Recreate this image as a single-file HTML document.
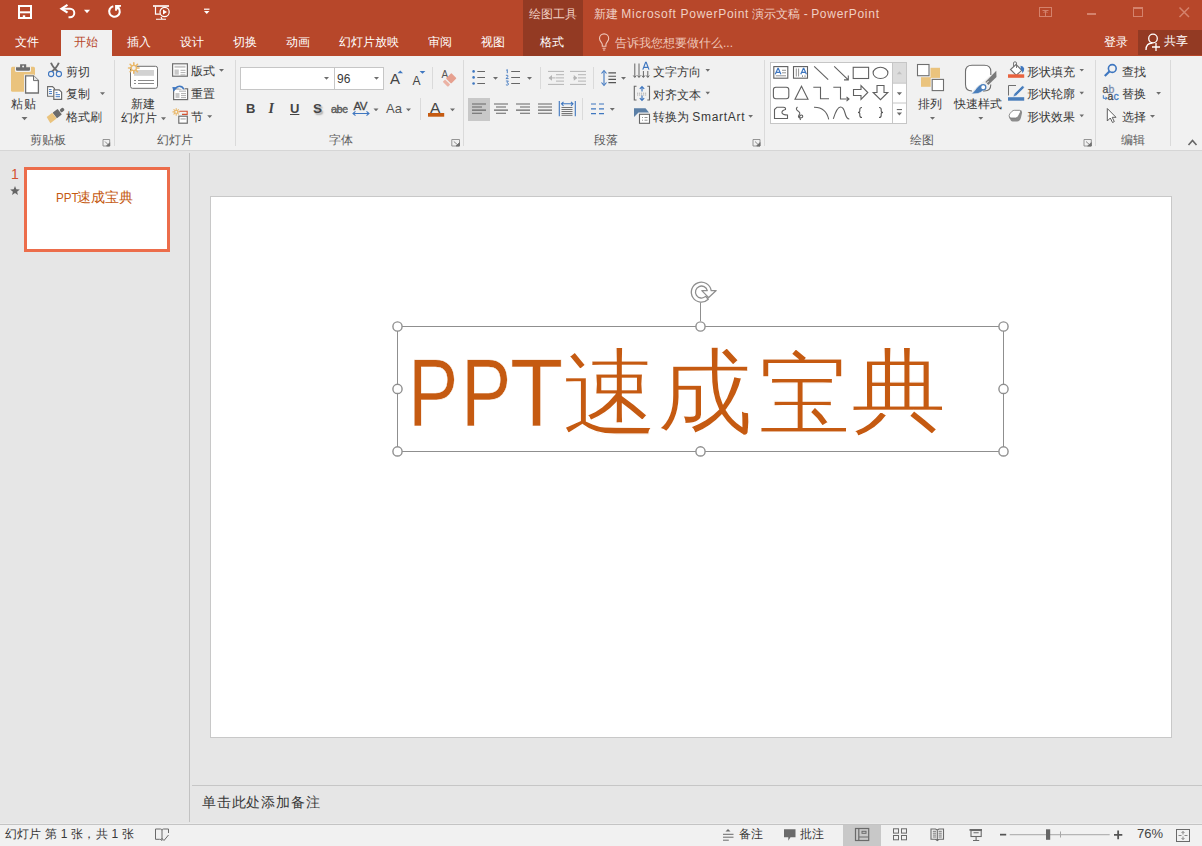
<!DOCTYPE html>
<html><head><meta charset="utf-8">
<style>
*{margin:0;padding:0;box-sizing:border-box}
html,body{width:1202px;height:846px;overflow:hidden;background:#e6e6e6;font-family:"Liberation Sans",sans-serif;font-size:12px;color:#444}
.a{position:absolute;white-space:nowrap}
.t{position:absolute;white-space:nowrap;font-size:12px;line-height:14px;color:#383838}
.tb{position:absolute;white-space:nowrap;font-size:12px;line-height:14px;color:#fff;top:35px}
.g{position:absolute;white-space:nowrap;font-size:12px;line-height:14px;color:#5c5c5c;top:133px}
#ic{position:absolute;left:0;top:0;width:1202px;height:846px;overflow:visible}
</style></head><body>
<!-- title bar & tabs -->
<div class="a" style="left:0;top:0;width:1202px;height:56px;background:#b7472a"></div>
<div class="a" style="left:523px;top:0;width:60px;height:56px;background:#933a23"></div>
<div class="a" style="left:1138px;top:30px;width:64px;height:25px;background:#933a23"></div>
<div class="a" style="left:61px;top:30px;width:51px;height:26px;background:#f1f1f1"></div>
<div class="tb" style="left:15px">文件</div>
<div class="tb" style="left:74px;color:#b7472a">开始</div>
<div class="tb" style="left:127px">插入</div>
<div class="tb" style="left:180px">设计</div>
<div class="tb" style="left:233px">切换</div>
<div class="tb" style="left:286px">动画</div>
<div class="tb" style="left:339px">幻灯片放映</div>
<div class="tb" style="left:428px">审阅</div>
<div class="tb" style="left:481px">视图</div>
<div class="tb" style="left:540px">格式</div>
<div class="tb" style="left:529px;top:7px;color:#f0cfc4">绘图工具</div>
<div class="tb" style="left:594px;top:7px;color:#f0cfc4">新建 <span style="letter-spacing:0.72px">Microsoft PowerPoint</span> 演示文稿 - <span style="letter-spacing:0.72px">PowerPoint</span></div>
<div class="tb" style="left:615px;top:36px;color:#efc6b9">告诉我您想要做什么...</div>
<div class="tb" style="left:1104px">登录</div>
<div class="tb" style="left:1164px;top:34px">共享</div>

<!-- ribbon -->
<div class="a" style="left:0;top:56px;width:1202px;height:94px;background:#f1f1f1"></div>
<div class="a" style="left:0;top:150px;width:1202px;height:1px;background:#d6d6d6"></div>
<!-- font boxes -->
<div class="a" style="left:240px;top:67px;width:95px;height:23px;background:#fff;border:1px solid #c6c6c6"></div>
<div class="a" style="left:334px;top:67px;width:50px;height:23px;background:#fff;border:1px solid #c6c6c6"></div>
<div class="t" style="left:337px;top:72px">96</div>
<!-- selected align left -->
<div class="a" style="left:468px;top:98px;width:22px;height:23px;background:#c8c8c8"></div>
<!-- gallery -->
<div class="a" style="left:770px;top:62px;width:137px;height:62px;background:#fff;border:1px solid #c6c6c6"></div>
<div class="a" style="left:892px;top:63px;width:14px;height:20px;background:#dcdcdc"></div>

<div class="t" style="left:10.5px;top:97px;letter-spacing:1px">粘贴</div>
<div class="t" style="left:66px;top:65px">剪切</div>
<div class="t" style="left:66px;top:87px">复制</div>
<div class="t" style="left:66px;top:110px">格式刷</div>
<div class="g" style="left:30px">剪贴板</div>
<div class="t" style="left:131px;top:97px">新建</div>
<div class="t" style="left:121px;top:111px">幻灯片</div>
<div class="t" style="left:191px;top:64px">版式</div>
<div class="t" style="left:191px;top:87px">重置</div>
<div class="t" style="left:191px;top:110px">节</div>
<div class="g" style="left:157px">幻灯片</div>
<div class="g" style="left:329px">字体</div>
<div class="t" style="left:653px;top:65px">文字方向</div>
<div class="t" style="left:653px;top:88px">对齐文本</div>
<div class="t" style="left:653px;top:110px">转换为 <span style="letter-spacing:0.7px">SmartArt</span></div>
<div class="g" style="left:594px">段落</div>
<div class="t" style="left:918px;top:97px">排列</div>
<div class="t" style="left:954px;top:97px">快速样式</div>
<div class="t" style="left:1027px;top:65px">形状填充</div>
<div class="t" style="left:1027px;top:87px">形状轮廓</div>
<div class="t" style="left:1027px;top:110px">形状效果</div>
<div class="g" style="left:910px">绘图</div>
<div class="t" style="left:1122px;top:65px">查找</div>
<div class="t" style="left:1122px;top:87px">替换</div>
<div class="t" style="left:1122px;top:110px">选择</div>
<div class="g" style="left:1121px">编辑</div>


<div class="a" style="left:390px;top:71px;font-size:15px;line-height:16px;color:#444">A</div>
<div class="a" style="left:412.5px;top:75px;font-size:12px;line-height:12px;color:#444">A</div>
<div class="a" style="left:441.5px;top:70px;font-size:10px;line-height:10px;color:#555">A</div>
<div class="a" style="left:246px;top:101px;font-size:13px;line-height:15px;color:#444;font-weight:bold">B</div>
<div class="a" style="left:268.5px;top:101px;font-size:14px;line-height:15px;color:#444;font-style:italic;font-weight:bold;font-family:'Liberation Serif',serif">I</div>
<div class="a" style="left:290px;top:101px;font-size:13px;line-height:15px;color:#444;font-weight:bold;text-decoration:underline">U</div>
<div class="a" style="left:313px;top:101px;font-size:13.5px;line-height:15px;color:#444;font-weight:bold;text-shadow:1.5px 1.5px 1.5px #aaa">S</div>
<div class="a" style="left:331px;top:102px;font-size:11px;line-height:15px;color:#555;letter-spacing:-0.5px;-webkit-text-stroke:0.3px #555">abc</div>
<div class="a" style="left:353.5px;top:100px;font-size:11.5px;line-height:13px;color:#444;letter-spacing:-0.6px;-webkit-text-stroke:0.3px #444">AV</div>
<div class="a" style="left:386px;top:101px;font-size:13px;line-height:15px;color:#555">Aa</div>
<div class="a" style="left:430px;top:100px;font-size:15.5px;line-height:15px;color:#444">A</div>

<!-- workspace -->
<div class="a" style="left:189px;top:153px;width:1px;height:669px;background:#c2c2c2"></div>
<div class="a" style="left:210px;top:196px;width:962px;height:542px;background:#fff;border:1px solid #c8c8c8"></div>
<div class="a" style="left:192px;top:785px;width:1010px;height:1px;background:#c6c6c6"></div>
<div class="a" style="left:202px;top:794px;font-size:14.4px;line-height:16px;color:#383838;letter-spacing:0.8px">单击此处添加备注</div>
<!-- status -->
<div class="a" style="left:0;top:823px;width:1202px;height:1px;background:#ebebeb"></div>
<div class="a" style="left:0;top:824px;width:1202px;height:1px;background:#c4c4c4"></div>
<div class="a" style="left:0;top:825px;width:1202px;height:21px;background:#f1f1f1"></div>
<div class="a" style="left:843px;top:825px;width:38px;height:21px;background:#c8c8c8"></div>
<div class="t" style="left:5px;top:827px;letter-spacing:0.2px">幻灯片 第 1 张，共 1 张</div>
<div class="t" style="left:739px;top:827px">备注</div>
<div class="t" style="left:800px;top:827px">批注</div>
<div class="a" style="left:1137px;top:826px;font-size:13px;line-height:15px;color:#444">76%</div>

<!-- thumbnail -->
<div class="a" style="left:24px;top:167px;width:146px;height:85px;background:#fff;border:3px solid #ec6d4b"></div>
<div class="a" style="left:56px;top:190px;color:#c55a11;font-size:13.6px;line-height:16px"><span style="display:inline-block;transform:scaleX(0.86);transform-origin:0 0;width:21px">PPT</span>速成宝典</div>
<div class="a" style="left:11px;top:166px;color:#d35230;font-size:14px;line-height:16px">1</div>

<!-- main text -->
<div class="a" style="left:0;top:0;font-size:96px;line-height:100px;color:#c55a11;-webkit-text-stroke:1.4px #fff">
<span class="a" style="left:407.5px;top:343px;transform:scaleX(0.784);transform-origin:0 0;-webkit-text-stroke:0.5px #fff">P</span>
<span class="a" style="left:460.5px;top:343px;transform:scaleX(0.784);transform-origin:0 0;-webkit-text-stroke:0.5px #fff">P</span>
<span class="a" style="left:510px;top:343px;transform:scaleX(0.906);transform-origin:0 0;-webkit-text-stroke:0.5px #fff">T</span>
<span class="a" style="left:562px;top:343px">速</span>
<span class="a" style="left:657px;top:343px;transform:scaleY(0.978);transform-origin:0 0">成</span>
<span class="a" style="left:757.5px;top:348px;transform:scale(0.96,0.943);transform-origin:0 0">宝</span>
<span class="a" style="left:851px;top:343px;transform:scaleY(0.95);transform-origin:0 0">典</span>
</div>

<svg id="ic" viewBox="0 0 1202 846">
<!-- separators -->
<g fill="#dadada">
<rect x="114" y="60" width="1" height="86"/><rect x="235" y="60" width="1" height="86"/>
<rect x="463" y="60" width="1" height="86"/><rect x="764" y="60" width="1" height="86"/>
<rect x="1095" y="60" width="1" height="86"/><rect x="1170" y="60" width="1" height="86"/>
<rect x="432" y="67" width="1" height="22"/><rect x="420" y="98" width="1" height="22"/>
<rect x="540" y="67" width="1" height="22"/><rect x="593" y="67" width="1" height="22"/>
<rect x="582" y="98" width="1" height="22"/>
</g>

<!-- title bar icons -->
<g fill="none" stroke="#fff" stroke-width="2">
<rect x="19" y="6" width="12" height="12"/>
</g>
<g fill="#fff">
<rect x="18" y="11.3" width="14" height="2"/>
<rect x="22.8" y="15.3" width="2.4" height="3"/>
</g>
<path d="M62.5,8.7 H70 A4.3,4.3 0 0 1 70,17.3 H68.5" fill="none" stroke="#fff" stroke-width="2"/>
<path d="M67.5,4.8 L61.5,8.7 L67.5,12.6" fill="none" stroke="#fff" stroke-width="2.2"/>
<path d="M84,9.8 H90 L87,13.2 Z" fill="#fff"/>
<path d="M113.3,6.3 A5.3,5.3 0 1 0 118.3,7.8" fill="none" stroke="#fff" stroke-width="2.1"/>
<path d="M121,5.9 H116 V10.8" fill="none" stroke="#fff" stroke-width="1.8"/>
<path d="M115.5,5.3 L120,5.3 L119,8.5 L116.5,10 Z" fill="#fff"/>
<g fill="none" stroke="#fff">
<path d="M153,6 H169" stroke-width="1.6"/>
<path d="M155.5,6.5 V14.2 H160" stroke-width="1.2"/>
<circle cx="164.6" cy="12" r="4.6" stroke-width="1.2"/>
<path d="M156,19.2 H166 M161,17 L162,19" stroke-width="1.1"/>
</g>
<path d="M163,9.5 L167,12 L163,14.5 Z" fill="#fff"/>
<rect x="204" y="8.6" width="5.5" height="1.2" fill="#fff"/>
<path d="M204,11 H209.5 L206.75,14 Z" fill="#fff"/>
<!-- window controls -->
<g fill="none" stroke="#d4826c" stroke-width="1">
<rect x="1039.5" y="7.5" width="12" height="9"/>
<path d="M1042.5,10.5 H1048.5 M1045.5,11 V16 M1043.5,13 L1045.5,11 L1047.5,13"/>
<rect x="1133.5" y="7.5" width="9" height="9"/>
</g><g fill="none" stroke="#d4826c"><path d="M1179.5,7.5 L1189,17 M1189,7.5 L1179.5,17" stroke-width="1.5"/>
</g>
<rect x="1133" y="7" width="10" height="2" fill="#d4826c"/>
<rect x="1087" y="13" width="9" height="2" fill="#d4826c"/>
<!-- share icon -->
<g fill="none" stroke="#fff" stroke-width="1.3">
<circle cx="1153" cy="38.5" r="4.3"/>
<path d="M1146,50 C1146,45 1149,43 1152.5,43"/>
<path d="M1152,47 H1160 M1156,43 V51"/>
</g>
<!-- lightbulb -->
<g fill="none" stroke="#efc6b9" stroke-width="1.1">
<path d="M602.3,46.3 V44.8 Q602.3,43.6 601.3,42.3 Q599.5,40.2 599.5,38.5 A4.6,4.6 0 0 1 608.7,38.5 Q608.7,40.2 606.9,42.3 Q605.9,43.6 605.9,44.8 V46.3 Z"/>
<path d="M602.5,48.3 H605.7 M603,50 H605.2"/>
</g>
<!-- rotation handle -->
<path d="M708.3,299.3 A10,10 0 1 1 711.2,290.6 L716.2,290.6 L708.7,297.6 L701.8,290.6 L707.3,290.6 A6,6 0 1 0 705.6,296.4 Z" fill="#fff" stroke="#8f8f8f" stroke-width="1.3" stroke-linejoin="round"/>
<!-- ===== clipboard group ===== -->
<rect x="11" y="66.8" width="24" height="25" rx="1.5" fill="#eac37d"/>
<path d="M15,66.5 H31 V70.5 Q31,72 29.5,72 H16.5 Q15,72 15,70.5 Z" fill="#f1f1f1"/>
<path d="M16,67.2 H30 V69.8 Q30,70.8 29,70.8 H17 Q16,70.8 16,69.8 Z M20.1,64.2 H26.2 V67.5 H20.1 Z" fill="#6d6d6d"/>
<circle cx="23.1" cy="66.4" r="1" fill="#f1f1f1"/>
<path d="M24,74.5 H34 L40,80 V94.5 H24 Z" fill="#f1f1f1"/>
<path d="M25.6,75.8 H33.5 L38.4,80.6 V93 H25.6 Z" fill="#fff" stroke="#707070" stroke-width="1.3"/>
<path d="M33.5,75.8 V80.6 H38.4" fill="#e4e4e4" stroke="#707070" stroke-width="1"/>
<path d="M21.5,117 H27.5 L24.5,120.3 Z" fill="#6d6d6d"/>
<!-- scissors -->
<path d="M51,62.8 Q52.5,67 58.2,72 M58.8,62.8 Q57.3,67 51.6,72" stroke="#6b6b6b" stroke-width="1.9" fill="none"/>
<circle cx="51.1" cy="74" r="2.6" fill="#f1f1f1" stroke="#3f77c0" stroke-width="1.1"/>
<circle cx="58.9" cy="74" r="2.6" fill="#f1f1f1" stroke="#3f77c0" stroke-width="1.1"/>
<!-- copy -->
<path d="M47.6,86.6 H52.5 L54.5,88.6 V96.2 H47.6 Z" fill="#fff" stroke="#6b6b6b" stroke-width="1.1"/>
<path d="M49,89.6 H51.5 M49,91.6 H52 M49,93.6 H52" stroke="#3f77c0" stroke-width="1"/>
<path d="M53.8,89.8 H59.2 L61.6,92.2 V99.3 H53.8 Z" fill="#fff" stroke="#6b6b6b" stroke-width="1.2"/>
<path d="M55.6,92.7 H57.5 M55.6,94.7 H60 M55.6,96.7 H60" stroke="#3f77c0" stroke-width="1"/>
<path d="M100,92.2 H105 L102.5,95 Z" fill="#6d6d6d"/>
<!-- format painter -->
<g transform="translate(57,113.8) rotate(-37)">
<rect x="4.2" y="-1.7" width="4.3" height="3.4" rx="1.2" fill="#6b6b6b"/>
<rect x="-2.8" y="-3.5" width="6.3" height="7" rx="0.6" fill="#6b6b6b"/>
<path d="M-3.2,-3.6 V3.6 L-11,3.6 L-10.2,-3.6 Z" fill="#eac37d"/>
</g>
<path d="M103,139.5 H109.7 V146 M103,139.5 V146 H109.7" fill="none" stroke="#8a8a8a" stroke-width="0.9"/>
<path d="M105,141.5 L109.5,146 M106.5,146 H109.7 V142.8 Z" fill="#707070" stroke="#707070" stroke-width="0.8"/>
<!-- ===== slides group ===== -->
<rect x="130.5" y="66.3" width="27" height="22" rx="2" fill="#fff" stroke="#6f6f6f" stroke-width="1"/>
<rect x="134" y="70" width="20" height="5.8" fill="#d2d2d2"/>
<path d="M134,80.5 H136 M138,80.5 H154 M134,83.5 H136 M138,83.5 H154" stroke="#8a8a8a" stroke-width="1"/>
<g stroke="#eab96b" stroke-width="1.6" stroke-linecap="round">
<path d="M133.8,62.8 V73.2 M128.6,68 H139 M130.1,64.3 L137.5,71.7 M137.5,64.3 L130.1,71.7"/>
</g>
<circle cx="133.8" cy="68" r="2.6" fill="#f1f1f1" stroke="#eab96b" stroke-width="1.3"/>
<path d="M161,117.3 H166 L163.5,120.3 Z" fill="#6d6d6d"/>
<!-- layout -->
<rect x="172.6" y="63.8" width="14.8" height="12.4" fill="#fff" stroke="#6f6f6f" stroke-width="1.2"/>
<rect x="174.5" y="65.8" width="11" height="2" fill="#c8c8c8"/>
<rect x="174.5" y="69.5" width="4.3" height="5.2" fill="#c8c8c8"/>
<path d="M180.5,70.3 H185.5 M180.5,72.6 H185.5 M180.5,74.9 H185.5" stroke="#999" stroke-width="0.8"/>
<path d="M219,69 H224 L221.5,71.8 Z" fill="#6d6d6d"/>
<!-- reset -->
<rect x="173.6" y="88.8" width="14" height="10.8" fill="#fff" stroke="#6f6f6f" stroke-width="1.2"/>
<rect x="175.5" y="93" width="4" height="5" fill="#c8c8c8"/>
<rect x="179" y="90.5" width="7" height="1.5" fill="#c8c8c8"/>
<path d="M181,93.6 H186 M181,95.6 H186 M181,97.6 H186" stroke="#999" stroke-width="0.8"/>
<path d="M174,87.5 Q176,86.6 178.5,86.6 Q182,86.6 183.5,89.5" fill="#f1f1f1" stroke="#f1f1f1" stroke-width="3.2"/>
<path d="M175.5,88 Q177.5,86.3 179.5,86.3 Q182.5,86.3 183.8,89.3" fill="none" stroke="#3f77c0" stroke-width="1.5"/>
<path d="M172.3,87 L177.6,87.3 L173.6,91.8 Z" fill="#3f77c0"/>
<!-- section -->
<g stroke="#eab96b" stroke-width="1.1" stroke-linecap="round">
<path d="M176.2,108.6 V115.2 M172.9,111.9 H179.5 M173.9,109.6 L178.5,114.2 M178.5,109.6 L173.9,114.2"/>
</g>
<circle cx="176.2" cy="111.9" r="1.5" fill="#f1f1f1" stroke="#eab96b" stroke-width="1"/>
<path d="M179.5,111.3 H187.2 V114.4 H182" fill="none" stroke="#d35230" stroke-width="1.1"/>
<rect x="178.8" y="116.2" width="8.5" height="7" fill="#fff" stroke="#6f6f6f" stroke-width="1.2"/>
<rect x="180.5" y="118" width="5.2" height="1.8" fill="#c8c8c8"/>
<path d="M207.2,115.3 H212.2 L209.7,118 Z" fill="#6d6d6d"/>


<!-- ===== font group ===== -->
<path d="M324,77 H329 L326.5,79.8 Z M374,77 H379 L376.5,79.8 Z" fill="#6d6d6d"/>
<path d="M397.5,73.3 L400.3,70.6 L403,73.3 Z M419.6,70.9 H425.4 L422.5,73.8 Z" fill="#3f77c0"/>
<path d="M451.8,139.5 H459.5 V146 M451.8,139.5 V146 H459.5" fill="none" stroke="#8a8a8a" stroke-width="0.9"/>
<path d="M453.8,141.5 L459,146 M456,146 H459.5 V142.5 Z" fill="#707070" stroke="#707070" stroke-width="0.8"/>
<path d="M753,139.5 H760 V146 M753,139.5 V146 H760" fill="none" stroke="#8a8a8a" stroke-width="0.9"/>
<path d="M755,141.5 L759.6,146 M756.7,146 H760 V142.6 Z" fill="#707070" stroke="#707070" stroke-width="0.8"/>
<path d="M1084,139.5 H1091.3 V146 M1084,139.5 V146 H1091.3" fill="none" stroke="#8a8a8a" stroke-width="0.9"/>
<path d="M1086,141.5 L1091,146 M1087.7,146 H1091.3 V142.6 Z" fill="#707070" stroke="#707070" stroke-width="0.8"/>
<!-- eraser -->
<g transform="translate(449.3,80.3) rotate(-45)"><rect x="-1" y="-3.6" width="7.5" height="7.2" rx="0.6" fill="#e6a08f"/><rect x="-5.6" y="-3.6" width="3.2" height="7.2" rx="0.6" fill="#ebb2a4"/></g>
<path d="M373.5,108.6 H378.5 L376,111.3 Z M406,108.6 H411 L408.5,111.3 Z M450,108.6 H455 L452.5,111.3 Z" fill="#6d6d6d"/>
<rect x="428" y="113" width="16.2" height="3.7" fill="#c55a11"/>
<path d="M353,113.5 H369 M355.5,111.3 L353,113.5 L355.5,115.7 M366.5,111.3 L369,113.5 L366.5,115.7" fill="none" stroke="#3f77c0" stroke-width="1.1"/>
<path d="M331,109.3 H348" stroke="#6d6d6d" stroke-width="1"/>


<!-- ===== paragraph group ===== -->
<g fill="#3f77c0"><circle cx="473.6" cy="71.4" r="1.3"/><circle cx="473.6" cy="77.4" r="1.3"/><circle cx="473.6" cy="83.5" r="1.3"/></g>
<path d="M477.3,71.5 H485 M477.3,77.5 H485 M477.3,83.5 H485" stroke="#666" stroke-width="1.1"/>
<path d="M493,77 H498 L495.5,79.8 Z M527,77 H532 L529.5,79.8 Z M621,77 H626 L623.5,79.8 Z M609.8,108 H614.8 L612.3,110.8 Z" fill="#6d6d6d"/>
<g fill="none" stroke="#3f77c0" stroke-width="0.9">
<path d="M506.2,70.3 L507.3,69.6 V73.2 M505.9,75.3 Q508.6,74.6 507.9,76.8 L505.9,78.6 H508.6 M505.9,81 H508.4 L507,82.7 Q508.8,83 508.4,84.6 Q507.5,85.6 505.9,84.8"/>
</g>
<path d="M511.2,71.5 H520 M511.2,77.5 H520 M511.2,83.5 H520" stroke="#666" stroke-width="1.1"/>
<!-- indents (disabled) -->
<g stroke="#b4b4b4" stroke-width="1">
<path d="M548,71.4 H564 M556,74.7 H564 M556,77.9 H564 M556,81.1 H564 M548,84.4 H564"/>
<path d="M570,71.4 H586 M578,74.7 H586 M578,77.9 H586 M578,81.1 H586 M570,84.4 H586"/>
<path d="M549.5,77.9 H555.5 M573,77.9 H576.5"/>
</g>
<path d="M548.5,77.9 L552,75 V80.8 Z M577.3,77.9 L573.8,75 V80.8 Z" fill="#b4b4b4"/>
<!-- line spacing -->
<path d="M604,71.5 V84.5" stroke="#3f77c0" stroke-width="1.1"/>
<path d="M601.5,73.5 L604,70.5 L606.5,73.5 M601.5,82.5 L604,85.5 L606.5,82.5" fill="none" stroke="#3f77c0" stroke-width="1.1"/>
<path d="M608.4,72.9 H616 M608.4,76.2 H616 M608.4,79.4 H616 M608.4,82.6 H616" stroke="#555" stroke-width="1.1"/>
<!-- align -->
<g stroke="#666" stroke-width="1.1">
<path d="M472,104 H486 M472,107 H482 M472,110.1 H486 M472,113.2 H482"/>
<path d="M494,104 H508 M496,107 H506 M494,110.1 H508 M496,113.2 H506"/>
<path d="M516,104 H530 M520,107 H530 M516,110.1 H530 M520,113.2 H530"/>
<path d="M538,104 H552 M538,107 H552 M538,110.1 H552 M538,113.2 H552"/>
<path d="M561.5,107.5 H572.5 M561.5,109.5 H572.5 M561.5,111.5 H572.5 M561.5,113.5 H572.5 M561.5,115.3 H572.5" stroke-width="0.9"/>
</g>
<g stroke="#3f77c0" stroke-width="1.1" fill="none">
<path d="M559.3,101 V116.2 M575.3,101 V116.2 M561.5,103.8 H573 M563.5,101.8 L561.5,103.8 L563.5,105.8 M571,101.8 L573,103.8 L571,105.8"/>
<path d="M591,104 H596 M599,104 H604 M591,108.9 H596 M599,108.9 H604 M591,113.6 H596 M599,113.6 H604"/>
</g>
<!-- text direction -->
<g stroke="#666" stroke-width="1" fill="none">
<path d="M634.8,63.5 V77 M639,63.5 V77 M643.4,71 V77 M647.8,71 V77"/>
<path d="M633.3,75.5 L634.8,77.5 L636.3,75.5 M637.5,75.5 L639,77.5 L640.5,75.5 M641.9,75.5 L643.4,77.5 L644.9,75.5 M646.3,75.5 L647.8,77.5 L649.3,75.5"/>
</g>
<path d="M642.8,69.6 L645.6,62.4 H646.2 L649,69.6 M643.8,67.3 H648" fill="none" stroke="#3f77c0" stroke-width="1.2"/>
<path d="M705.5,69 H710 L707.75,71.7 Z M705.5,91.8 H710 L707.75,94.5 Z M748.2,115 H753 L750.6,117.8 Z" fill="#6d6d6d"/>
<!-- align text -->
<g stroke="#666" stroke-width="1.1" fill="none">
<path d="M636.5,86.2 H634.3 V100 H636.5 M647.3,86.2 H649.5 V100 H647.3"/>
</g>
<path d="M637,93.2 H647 M637,95 H647" stroke="#999" stroke-width="0.8" stroke-dasharray="1.2 0.8"/>
<path d="M642,86.5 V91.5 M642,95.5 V100.5 M639.8,88.8 L642,86.5 L644.2,88.8 M639.8,98.2 L642,100.5 L644.2,98.2" fill="none" stroke="#3f77c0" stroke-width="1.2"/>
<!-- smartart -->
<path d="M634,108.2 H645.5 L649,112.5 H638.5 L634,117 Z" fill="#5b7fa6"/>
<rect x="639.5" y="114.3" width="10" height="9" fill="#fff" stroke="#666" stroke-width="1.1"/>
<path d="M642,117.5 H643 M644.5,117.5 H647.5 M642,120.2 H643 M644.5,120.2 H647.5" stroke="#888" stroke-width="0.9"/>


<!-- ===== shapes gallery ===== -->
<path d="M892.5,63 V123 M892.5,83.2 H906.5 M892.5,103 H906.5" stroke="#c6c6c6" stroke-width="1" fill="none"/>
<path d="M896.8,74.2 L899.4,71.3 L902,74.2 Z" fill="#c0c0c0"/>
<path d="M896.8,92.3 H902 L899.4,95.2 Z M896.8,112.4 H902 L899.4,115.4 Z" fill="#6d6d6d"/>
<rect x="896.8" y="109" width="5.2" height="1.1" fill="#6d6d6d"/>
<g fill="none" stroke="#606060" stroke-width="1.1">
<rect x="773.8" y="66.6" width="14" height="11.6"/>
<path d="M782,70.3 H786 M782,72.8 H786 M775.8,75.8 H786" stroke="#888" stroke-width="0.9"/>
<rect x="793.5" y="66.6" width="14" height="11.6"/>
<path d="M796.3,68.5 V76.5 M798.6,68.5 V76.5 M802.5,75.3 V77 M805,75.3 V77" stroke="#888" stroke-width="0.9"/>
<path d="M814.2,66.3 L828.2,79.7"/>
<path d="M834.2,66.3 L848,79.7 M848.3,75.5 V79.9 H844"/>
<rect x="853.2" y="67.3" width="15.4" height="11.2"/>
<ellipse cx="880.5" cy="72.9" rx="7.4" ry="5.6"/>
<rect x="773.4" y="87.2" width="15.4" height="11.5" rx="2.5"/>
<path d="M801.5,86.3 L808,99.2 H795 Z"/>
<path d="M813.3,87.2 H820.5 V98.7 H829"/>
<path d="M833.3,87.2 H840.5 V99 H849 M846.5,96.8 L849,99 L846.5,101.2"/>
<path d="M853.5,89.5 H861 V85.5 L867.8,92.5 L861,99.5 V95.5 H853.5 Z"/>
<path d="M877,85.5 H884 V92.5 H887.8 L880.5,99.7 L873.2,92.5 H877 Z"/>
<path d="M774.5,109.5 L777,107.2 H783.5 Q786,107.2 785.5,109.5 Q781.5,110.5 782,113 Q783,115 787.5,115 V118.5 H774.5 Z"/>
<path d="M797.5,107 Q795,109 798,111 Q801,113 799,115 Q797.5,117 800,118 Q803.5,118 802.5,115.5 Q801,114 799.5,116.5 L800.5,120"/>
<path d="M814,107.2 Q826,107 828.7,119.3"/>
<path d="M833.3,118.8 Q837,107 840.5,107 Q843.5,107 845,113 Q846.5,119 849.3,119"/>
</g>
<path d="M775.3,74.3 L777.9,68.3 H778.3 L780.9,74.3 M776.3,72.3 H779.9" fill="none" stroke="#3f77c0" stroke-width="1.2"/>
<path d="M800.8,74.3 L803.4,68.3 H803.8 L806.4,74.3 M801.8,72.3 H805.4" fill="none" stroke="#3f77c0" stroke-width="1.2"/>
<path d="M862,107.5 Q859.8,107.5 859.8,109.5 V111.3 Q859.8,112.4 858,112.4 Q859.8,112.4 859.8,113.5 V115.5 Q859.8,117.5 862,117.5" fill="none" stroke="#555" stroke-width="1.1"/>
<path d="M879,107.5 Q881.2,107.5 881.2,109.5 V111.3 Q881.2,112.4 883,112.4 Q881.2,112.4 881.2,113.5 V115.5 Q881.2,117.5 879,117.5" fill="none" stroke="#555" stroke-width="1.1"/>
<!-- ===== drawing group ===== -->
<rect x="921" y="67.8" width="19" height="19" fill="#eac37d"/>
<rect x="917.5" y="64.5" width="11.5" height="11.2" fill="#fff" stroke="#f1f1f1" stroke-width="3"/>
<rect x="917.5" y="64.5" width="11.5" height="11.2" fill="#fff" stroke="#6f6f6f" stroke-width="1.1"/>
<rect x="932.2" y="79.4" width="11.3" height="11.2" fill="#fff" stroke="#f1f1f1" stroke-width="3"/>
<rect x="932.2" y="79.4" width="11.3" height="11.2" fill="#fff" stroke="#6f6f6f" stroke-width="1.1"/>
<path d="M930,117 H935 L932.5,119.8 Z M978.3,117 H983.3 L980.8,119.8 Z" fill="#6d6d6d"/>
<path d="M972,91 Q965.5,91 965.5,84.5 V71.5 Q965.5,65.2 972,65.2 H984.5 Q990.8,65.2 990.8,71.5 V75" fill="#fff" stroke="#6f6f6f" stroke-width="1.1"/>
<path d="M990.8,84.5 Q990.8,91 984.5,91 H983" fill="none" stroke="#6f6f6f" stroke-width="1.1"/>
<path d="M996.3,70.8 L996.5,77 L988.3,85 L985.3,82 Z" fill="#7a7a7a"/><path d="M985,84.6 L988.6,81" stroke="#f1f1f1" stroke-width="1"/>
<path d="M985.8,86.5 Q984,91.5 978,93.5 L971.5,94 Q975,90.5 977,87.5 Q979.5,84 983,84.5 Z" fill="#4a7ebb" stroke="#f1f1f1" stroke-width="0.6"/>
<circle cx="983.2" cy="87.3" r="2.6" fill="#fff" stroke="#4a7ebb" stroke-width="1.3"/>
<!-- shape fill -->
<path d="M1016,64.5 L1021.8,70.3 L1016.3,75.3 L1010.5,69.5 Z" fill="#fff" stroke="#6f6f6f" stroke-width="1.1"/>
<path d="M1013.5,67 V63 Q1013.5,61.8 1015,61.8 Q1016.5,61.8 1016.5,63 V68" fill="none" stroke="#6f6f6f" stroke-width="0.9"/>
<path d="M1020.5,65.8 Q1023.5,66 1024.2,68.5 Q1024.5,71 1022.3,73.2 Q1022.5,70.5 1020.8,69.6 Z" fill="#3f77c0"/>
<rect x="1008" y="74.3" width="16.2" height="3.5" fill="#e8623e"/>
<path d="M1008.5,95.5 V85.5 H1016" fill="none" stroke="#6f6f6f" stroke-width="1"/>
<path d="M1014.2,93.8 L1021.8,86.2 Q1022.6,85.4 1023.4,86.2 L1023.8,86.6 Q1024.6,87.4 1023.8,88.2 L1016.2,95.8 L1013,96.8 Z" fill="#4a7ebb" stroke="#e9eef6" stroke-width="0.6"/>
<rect x="1008" y="97.2" width="16.2" height="3.5" fill="#4a7ebb"/>
<path d="M1010,119 Q1008,117.5 1009.5,114.5 L1012,111.5 Q1013,110 1015,110 H1019.5 Q1022.5,110 1022,113 L1021,117.5 Q1020,121.5 1017,121.5 H1012.5 Q1011,121.5 1010,119 Z" fill="#8c8c8c"/>
<path d="M1009.5,117 Q1008.5,115.5 1010,113.5 L1012,111.3 Q1013,110.3 1014.5,110.3 H1019.5 Q1021.3,110.3 1020.3,112.5 L1018.5,116 Q1017.5,118 1015.5,118 H1011 Q1010,118 1009.5,117 Z" fill="#fff" stroke="#7a7a7a" stroke-width="0.8"/>
<path d="M1079.5,69 H1084 L1081.75,71.6 Z M1079.5,91.8 H1084 L1081.75,94.4 Z M1079.5,114.6 H1084 L1081.75,117.2 Z" fill="#6d6d6d"/>
<!-- ===== editing ===== -->
<circle cx="1112.3" cy="68.5" r="3.9" fill="none" stroke="#3f77c0" stroke-width="1.6"/>
<path d="M1109.6,71.3 L1104.8,76" stroke="#3f77c0" stroke-width="2.2"/>
<path d="M1103.3,95.2 V98.3 H1107 M1105.5,96.8 L1107,98.3 L1105.5,99.8" fill="none" stroke="#3f77c0" stroke-width="1"/>
<text x="1102.5" y="92.5" font-size="10.5" fill="#555" stroke="#555" stroke-width="0.3" font-family="Liberation Sans">a</text>
<text x="1108.6" y="92.5" font-size="10.5" fill="#7d8fb0" stroke="#7d8fb0" stroke-width="0.3" font-family="Liberation Sans">b</text>
<text x="1107.6" y="99.6" font-size="10.5" fill="#444" stroke="#444" stroke-width="0.3" font-family="Liberation Sans">a</text>
<text x="1113.5" y="99.6" font-size="10.5" fill="#3f77c0" stroke="#3f77c0" stroke-width="0.3" font-family="Liberation Sans">c</text>
<path d="M1156.2,92 H1161 L1158.6,94.8 Z M1150,115 H1155 L1152.5,117.7 Z" fill="#6d6d6d"/>
<path d="M1107.3,108.5 V121 L1110.3,118 L1112.5,122.5 L1114.3,121.6 L1112.2,117.3 H1116 Z" fill="#fff" stroke="#606060" stroke-width="1"/>
<path d="M1188.5,145 L1192.5,140.5 L1196.5,145" fill="none" stroke="#666" stroke-width="1.6"/>


<!-- ===== status bar ===== -->
<g fill="none" stroke="#6a6a6a" stroke-width="1">
<path d="M155.5,829 H160.5 Q162,829 162,830.5 V840.5 Q161,839.3 159.5,839.3 H155.5 Z"/>
<path d="M162,830.5 Q162,829 163.5,829 H168.5 V833"/>
<path d="M161.5,838 L164,840.5 L168.5,835"/>
<path d="M723,834.3 H733.5 M723,837.2 H733.5 M723,840.2 H728.8"/>
<rect x="855.5" y="828.5" width="13.2" height="12" stroke-width="1.2"/>
<rect x="862" y="831.3" width="4" height="2" stroke-width="1"/>
<path d="M858.8,828.8 V840.2 M858.8,837 H868.5" stroke-width="1.2"/>
<rect x="893.5" y="828.8" width="5" height="4.3"/><rect x="901.5" y="828.8" width="5" height="4.3"/>
<rect x="893.5" y="835.5" width="5" height="4.3"/><rect x="901.5" y="835.5" width="5" height="4.3"/>
<path d="M931,829 H935.5 L937.3,830 L939,829 H943.5 V839.3 H939 L937.3,840.5 L935.5,839.3 H931 Z M937.3,830 V840.5" stroke-width="1.1"/>
<path d="M932.8,831.3 H936 M932.8,833.2 H936 M932.8,835.1 H936 M932.8,837 H936 M938.6,831.3 H941.8 M938.6,833.2 H941.8 M938.6,835.1 H941.8 M938.6,837 H941.8" stroke-width="0.9"/>
<rect x="971" y="830.5" width="10.2" height="6" stroke-width="1.1"/>
<path d="M973.5,832.8 H978.7 M976.1,836.5 V840.3 M973,840.5 H979.2" stroke-width="1.1"/>
<rect x="1176.5" y="829.5" width="13" height="12"/>
</g>
<path d="M725.5,831.6 L728,829 L730.5,831.6 Z" fill="#6a6a6a"/>
<rect x="969.5" y="829" width="12.5" height="1.8" fill="#6a6a6a"/>
<path d="M784,829.3 H795.5 V837.3 H790.5 L788.3,840.8 V837.3 H784 Z" fill="#6a6a6a"/>
<g stroke="#7a7a7a" stroke-width="0.9" fill="none">
<path d="M1183,831.5 V834.5 M1181.5,833 L1183,831.5 L1184.5,833 M1183,836.5 V839.5 M1181.5,838 L1183,839.5 L1184.5,838 M1178.5,835.5 H1181.5 M1184.5,835.5 H1187.5"/>
</g>
<rect x="1000" y="833.8" width="6.2" height="1.7" fill="#555"/>
<rect x="1009.7" y="834.2" width="100" height="1" fill="#a6a6a6"/>
<rect x="1060" y="831.5" width="1" height="6" fill="#a6a6a6"/>
<rect x="1046" y="829.3" width="4.2" height="10.5" fill="#666"/>
<path d="M1114,834.8 H1122.3 M1118.15,830.4 V839.2" stroke="#555" stroke-width="1.8"/>
<!-- thumbnail star -->
<path d="M15,186 L16.3,189.3 L19.8,189.5 L17.1,191.7 L18,195 L15,193.1 L12,195 L12.9,191.7 L10.2,189.5 L13.7,189.3 Z" fill="#666"/>

<!-- selection box -->
<g fill="none" stroke="#8f8f8f" stroke-width="1">
<rect x="397.5" y="326.5" width="606" height="125"/>
<line x1="700.5" y1="302.5" x2="700.5" y2="321"/>
</g>
<g fill="#fff" stroke="#8f8f8f" stroke-width="1.4">
<circle cx="397.5" cy="326.5" r="4.6"/><circle cx="700.5" cy="326.5" r="4.6"/><circle cx="1003.5" cy="326.5" r="4.6"/>
<circle cx="397.5" cy="388.9" r="4.6"/><circle cx="1003.5" cy="388.9" r="4.6"/>
<circle cx="397.5" cy="451.4" r="4.6"/><circle cx="700.5" cy="451.4" r="4.6"/><circle cx="1003.5" cy="451.4" r="4.6"/>
</g>
</svg>
</body></html>
